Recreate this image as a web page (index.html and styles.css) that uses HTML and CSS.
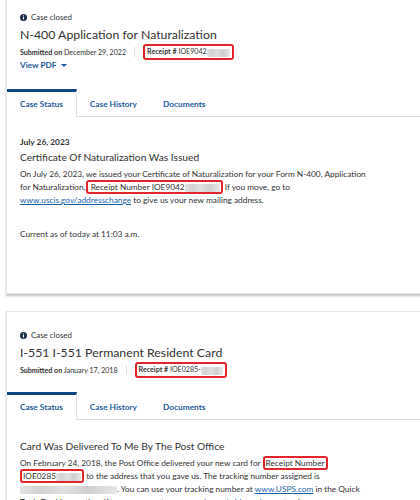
FILE: index.html
```html
<!DOCTYPE html>
<html lang="en">
<head>
  <meta charset="UTF-8" />
  <meta name="viewport" content="width=device-width, initial-scale=1" />
  <title>My Cases</title>
  <link rel="stylesheet" href="styles.css">
</head>
<body>

<div class="cases">

  <!-- Case 1 -->
  <section class="case-card">
    <div class="case-head">
      <div class="case-state">
        <svg class="info-icon" viewBox="0 0 16 16" width="7" height="7"><circle cx="8" cy="8" r="8" fill="#1c2b48"/><rect x="6.7" y="6.8" width="2.6" height="5.8" fill="#fff"/><circle cx="8" cy="4.2" r="1.5" fill="#fff"/></svg>
        Case closed
      </div>
      <h2 class="case-title">N-400 Application for Naturalization</h2>
      <div class="case-meta">
        <span><b>Submitted on</b> December 29, 2022</span>
        <span class="divider"></span>
        <span class="receipt marked"><b>Receipt #</b> IOE9042<span class="redacted r-23"></span></span>
      </div>
      <a class="view-pdf" href="#">View PDF <span class="caret"></span></a>
    </div>

    <nav class="tabs">
      <a class="tab active" href="#">Case Status</a>
      <a class="tab" href="#">Case History</a>
      <a class="tab" href="#">Documents</a>
    </nav>

    <div class="panel">
      <div class="status-date">July 26, 2023</div>
      <h3 class="status-title">Certificate Of Naturalization Was Issued</h3>
      <p class="status-text">On July 26, 2023, we issued your Certificate of Naturalization for your Form N-400, Application for Naturalization,<span class="marked"> Receipt Number <span class="case-id">IOE9042<span class="redacted r-35"></span></span></span> If you move, go to <a href="#">www.uscis.gov/addresschange</a> to give us your new mailing address.</p>
      <p class="current">Current as of today at 11:03 a.m.</p>
    </div>
  </section>

  <!-- Case 2 -->
  <section class="case-card">
    <div class="case-head">
      <div class="case-state">
        <svg class="info-icon" viewBox="0 0 16 16" width="7" height="7"><circle cx="8" cy="8" r="8" fill="#1c2b48"/><rect x="6.7" y="6.8" width="2.6" height="5.8" fill="#fff"/><circle cx="8" cy="4.2" r="1.5" fill="#fff"/></svg>
        Case closed
      </div>
      <h2 class="case-title">I-551 I-551 Permanent Resident Card</h2>
      <div class="case-meta">
        <span><b>Submitted on</b> January 17, 2018</span>
        <span class="divider"></span>
        <span class="receipt marked"><b>Receipt #</b> IOE0285-<span class="redacted r-22"></span></span>
      </div>
    </div>

    <nav class="tabs">
      <a class="tab active" href="#">Case Status</a>
      <a class="tab" href="#">Case History</a>
      <a class="tab" href="#">Documents</a>
    </nav>

    <div class="panel">
      <h3 class="status-title">Card Was Delivered To Me By The Post Office</h3>
      <p class="status-text">On February 24, 2018, the Post Office delivered your new card for <span class="marked">Receipt Number <span class="case-id">IOE0285<span class="redacted r-25"></span></span></span> to the address that you gave us. The tracking number assigned is <span class="redacted r-97"></span>. You can use your tracking number at <a href="#">www.USPS.com</a> in the Quick Tools Tracking section. If you move, go to <a href="#">www.uscis.gov/addresschange</a> to give us your new mailing address.</p>
    </div>
  </section>

</div>

</body>
</html>
```

FILE: styles.css
```css
html, body { overflow: hidden; }
body { margin: 0; font-family: Lato, "Liberation Sans", Arial, sans-serif; color: #333; background: #fff; }

.cases { margin-top: -7px; padding-left: 6px; }

.case-card {
  width: 440px;
  background: #fff;
  border: 1px solid #e6e6e6;
  box-shadow: 0 2px 2px rgba(0, 0, 0, 0.25);
  margin-bottom: 17px;
}

.case-head { padding: 17px 13px 15px; }
.case-state { display: flex; align-items: center; gap: 4px; font-size: 7.9px; line-height: 12px; }
.info-icon { display: block; }
.case-title { margin: 2px 0 0; font-size: 12.3px; font-weight: 400; line-height: 20px; color: #333; }
.case-meta { display: flex; align-items: center; height: 14px; font-size: 7.1px; }
.case-meta b { font-weight: 700; }
.divider { width: 1px; height: 10px; background: #ddd; margin: 0 8px; }

.marked { border: 2px solid #e3252b; border-radius: 3px; }
.receipt { padding: 1px 2px; line-height: 9px; }
.case-id { white-space: nowrap; }

.redacted {
  display: inline-block;
  height: 8px;
  vertical-align: middle;
  background: linear-gradient(90deg, #e4e4e4, #d2d2d2 20%, #e0e0e0 45%, #cfcfcf 70%, #e8e8e8);
}
.r-22 { width: 22px; }
.r-23 { width: 23px; }
.r-25 { width: 25px; }
.r-35 { width: 35px; }
.r-97 { width: 97px; }

.view-pdf {
  display: flex;
  align-items: center;
  gap: 5px;
  width: max-content;
  margin-bottom: 3px;
  font-size: 8.2px;
  line-height: 12px;
  font-weight: 700;
  color: #1a5a9e;
  text-decoration: none;
}
.caret { border-left: 3px solid transparent; border-right: 3px solid transparent; border-top: 3px solid #1a5a9e; }

.tabs { display: flex; border-bottom: 1px solid #e0e0e0; }
.tab {
  padding: 0 13px;
  border-top: 3px solid transparent;
  font-size: 8.3px;
  line-height: 24px;
  font-weight: 700;
  color: #1d5b99;
  text-decoration: none;
}
.tab.active {
  border-top-color: #0d4683;
  border-right: 1px solid #e0e0e0;
  background: #fff;
  margin-bottom: -1px;
  padding-bottom: 1px;
}

.panel { padding: 18px 13px 52px; }
.status-date { font-size: 8.4px; font-weight: 700; line-height: 14px; }
.status-title { margin: 0; font-size: 10.2px; font-weight: 400; line-height: 16px; }
.status-text { margin: 3px 0 0; max-width: 352px; font-size: 8.3px; line-height: 13px; }
.status-text .marked { padding: 0 1px; -webkit-box-decoration-break: clone; box-decoration-break: clone; }
.status-text a { color: #1a5fa8; }
.current { margin: 21px 0 0; font-size: 8.3px; line-height: 13px; }
```
